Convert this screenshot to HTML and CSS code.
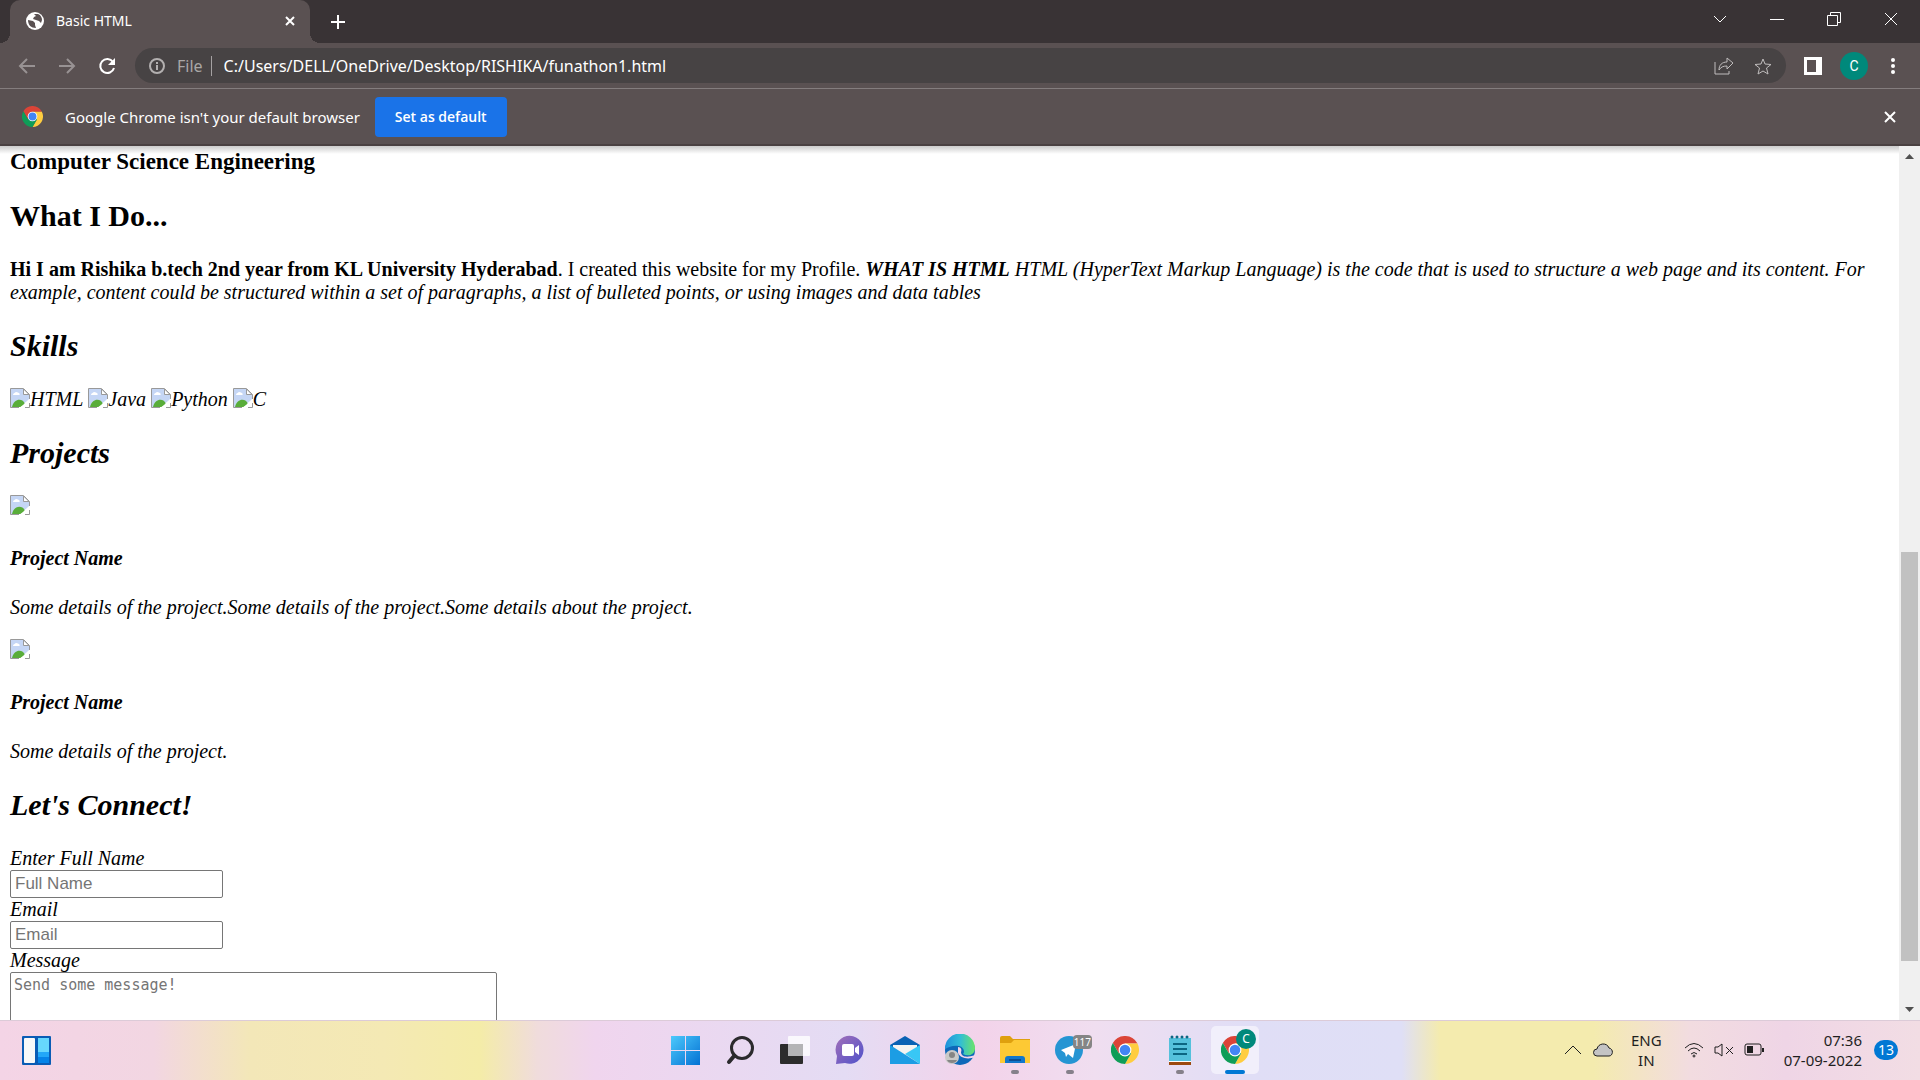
FILE: index.html
```html
<!DOCTYPE html>
<html lang="en">
<head>
  <title>Basic HTML</title>
  <meta charset="UTF-8">
  <link rel="stylesheet" href="styles.css">
</head>
<body>
<svg class="defs" width="0" height="0">
  <symbol id="chrome" viewBox="0 0 48 48">
    <path fill="#db4437" d="M3.2 12A24 24 0 0 1 44.800 12L45.400 13H24L13.600 30z"/>
    <path fill="#ffcd40" d="M24 13h21.400A24 24 0 0 1 24 48l10.400-18z"/>
    <path fill="#0f9d58" d="M24 48 34.400 30 24 24 13.600 30 3.200 12A24 24 0 0 0 24 48z"/>
    <circle cx="24" cy="24" r="11" fill="#fff"/>
    <circle cx="24" cy="24" r="9" fill="#4285f4"/>
  </symbol>
  <symbol id="broken" viewBox="0 0 20 20">
    <path fill="#c5d6f5" d="M1 1h12l6 6v5L9 19H1z"/>
    <path fill="#fff" d="M3 7c0-2 2-2 3-3 2 0 2 1 3 1 1 1 1 2 0 2z"/>
    <path fill="#59ad3a" d="M2 19c2-9 11-9 13-3l-4 3z"/>
    <path fill="#fff" d="M20 10v4l-6 6H9l4-3z"/>
    <path fill="#fff" stroke="#999" d="M13.500 1v5.500h5.500z"/>
    <path fill="none" stroke="#999" d="M9 19.500H.5V.5h13l6 6V11M15 19.500h4.500V15"/>
  </symbol>
</svg>

<header class="tabs">
  <div class="tab">
    <svg width="18" height="18" viewBox="0 0 18 18"><circle cx="9" cy="9" r="9" fill="#fff"/><path fill="#5a5152" d="M2 8l5 1 2 2v2l1 3c-5 0-8-3-8-8zM8 2h4c3 1 4 4 4 6l-1 3-2-2-3-1-3-1 1-2 2-1z"/></svg>
    <span class="tab-title">Basic HTML</span>
    <button class="icon" aria-label="Close tab"><svg width="10" height="10" viewBox="0 0 10 10"><path d="M1 1l8 8M9 1L1 9"/></svg></button>
  </div>
  <button class="icon new-tab" aria-label="New tab"><svg width="16" height="16" viewBox="0 0 16 16"><path d="M8 1v14M1 8h14"/></svg></button>
  <div class="window-buttons">
    <button class="icon thin" aria-label="Search tabs"><svg width="14" height="14" viewBox="0 0 14 14"><path d="M1 4l6 6 6-6"/></svg></button>
    <button class="icon thin" aria-label="Minimize"><svg width="14" height="14" viewBox="0 0 14 14"><path d="M0 7.500h14"/></svg></button>
    <button class="icon thin" aria-label="Restore"><svg width="14" height="14" viewBox="0 0 14 14"><path d="M.5 3.500h10v10H.5zM3.500 3V.5h10v10H11"/></svg></button>
    <button class="icon thin" aria-label="Close"><svg width="14" height="14" viewBox="0 0 14 14"><path d="M1 1l12 12M13 1L1 13"/></svg></button>
  </div>
</header>

<nav class="toolbar">
  <button class="icon dim" aria-label="Back"><svg width="18" height="18" viewBox="0 0 18 18"><path d="M17 9H2M9 2L2 9l7 7"/></svg></button>
  <button class="icon dim" aria-label="Forward"><svg width="18" height="18" viewBox="0 0 18 18"><path d="M1 9h15M9 2l7 7-7 7"/></svg></button>
  <button class="icon" aria-label="Reload"><svg width="18" height="18" viewBox="0 0 18 18"><path d="M15 5a7 7 0 1 0 1 6"/><path class="solid" d="M17 1v7h-7z"/></svg></button>
  <div class="address">
    <svg class="info" width="16" height="16" viewBox="0 0 16 16"><circle cx="8" cy="8" r="7"/><path d="M8 7v5M8 4v2"/></svg>
    <span class="scheme">File</span>
    <input class="url" type="text" aria-label="Address" value="C:/Users/DELL/OneDrive/Desktop/RISHIKA/funathon1.html">
    <button class="icon soft" aria-label="Share"><svg width="20" height="18" viewBox="0 0 20 18"><path d="M1 5v12h14v-3M5 13c0-5 3-8 8-8V1l6 5-6 6V9c-4 0-6 1-8 4z"/></svg></button>
    <button class="icon soft" aria-label="Bookmark"><svg width="18" height="18" viewBox="0 0 18 18"><path d="M9 2l2 5 6 .5-4.500 3.500 1.500 6-5-3-5 3 1.500-6L1 7.500 7 7z"/></svg></button>
  </div>
  <div class="toolbar-end">
    <button class="icon" aria-label="Side panel"><svg width="18" height="18" viewBox="0 0 18 18"><path class="solid" fill-rule="evenodd" d="M0 0h18v18H0zM3 3v12h9V3z"/></svg></button>
    <button class="avatar" aria-label="Profile">C</button>
    <button class="icon" aria-label="Menu"><svg width="10" height="18" viewBox="0 0 10 18"><g class="solid"><circle cx="7" cy="3" r="2"/><circle cx="7" cy="9" r="2"/><circle cx="7" cy="15" r="2"/></g></svg></button>
  </div>
</nav>

<div class="infobar">
  <svg width="21" height="21"><use href="#chrome"/></svg>
  <span class="infobar-text">Google Chrome isn't your default browser</span>
  <button class="default-button">Set as default</button>
  <button class="icon infobar-close" aria-label="Dismiss"><svg width="12" height="12" viewBox="0 0 12 12"><path d="M1 1l10 10M11 1L1 11"/></svg></button>
</div>

<div class="viewport">
  <main class="page">
    <h3>Computer Science Engineering</h3>
    <h2>What I Do...</h2>
    <p><b>Hi I am Rishika b.tech 2nd year from KL University Hyderabad</b>. I created this website for my Profile. <i><b>WHAT IS HTML</b> HTML (HyperText Markup Language) is the code that is used to structure a web page and its content. For example, content could be structured within a set of paragraphs, a list of bulleted points, or using images and data tables</i></p>
    <div class="slanted">
      <h2>Skills</h2>
      <div class="skills">
        <span><svg width="20" height="20"><use href="#broken"/></svg>HTML</span>
        <span><svg width="20" height="20"><use href="#broken"/></svg>Java</span>
        <span><svg width="20" height="20"><use href="#broken"/></svg>Python</span>
        <span><svg width="20" height="20"><use href="#broken"/></svg>C</span>
      </div>
      <h2>Projects</h2>
      <div class="picture"><svg width="20" height="20"><use href="#broken"/></svg></div>
      <h4>Project Name</h4>
      <p>Some details of the project.Some details of the project.Some details about the project.</p>
      <div class="picture"><svg width="20" height="20"><use href="#broken"/></svg></div>
      <h4>Project Name</h4>
      <p>Some details of the project.</p>
      <h2>Let's Connect!</h2>
      <form>
        <label for="name">Enter Full Name</label>
        <input class="field" type="text" id="name" placeholder="Full Name">
        <label for="email">Email</label>
        <input class="field" type="email" id="email" placeholder="Email">
        <label for="message">Message</label>
        <textarea class="message" id="message" placeholder="Send some message!"></textarea>
      </form>
    </div>
  </main>
  <div class="scrollbar">
    <svg width="9" height="5" viewBox="0 0 9 5"><path d="M0 5l4.500-5L9 5z"/></svg>
    <div class="track"><div class="thumb"></div></div>
    <svg width="9" height="5" viewBox="0 0 9 5"><path d="M0 0h9L4.500 5z"/></svg>
  </div>
</div>

<footer class="taskbar">
  <div class="side">
    <button class="app" aria-label="Widgets"><svg width="32" height="32" viewBox="0 0 32 32"><rect x="2" y="2" width="29" height="29" rx="1" fill="#0a5cb5"/><rect x="4" y="4" width="11" height="25" rx="1" fill="#f8f8f8"/><path fill="#67d7fd" d="M18 4h11v14H18z"/><path fill="#22a7f8" d="M18 18h11v5H18z"/><path fill="#0583e8" d="M18 23h11v6H18z"/></svg></button>
  </div>
  <div class="apps">
    <button class="app" aria-label="Start"><svg width="32" height="32" viewBox="0 0 32 32"><defs><linearGradient id="win" x2="1" y2="1"><stop stop-color="#4cc9fc"/><stop offset="1" stop-color="#0471d3"/></linearGradient></defs><path fill="url(#win)" d="M2 2h14v14H2zM17 2h14v14H17zM2 17h14v14H2zM17 17h14v14H17z"/></svg></button>
    <button class="app" aria-label="Search"><svg width="32" height="32" viewBox="0 0 32 32"><circle cx="18" cy="14" r="10.500" fill="none" stroke="#2b2a2d" stroke-width="3"/><path stroke="#2b2a2d" stroke-width="4" stroke-linecap="round" d="M10.500 21.500L5 28"/></svg></button>
    <button class="app" aria-label="Task view"><svg width="32" height="32" viewBox="0 0 32 32"><rect x="1" y="10" width="23" height="20" rx="1" fill="#2c2c2c"/><rect x="9" y="2" width="22" height="20" rx="1" fill="#fff" opacity=".8"/><path fill="#b4b4b6" d="M9 10h15v12H9z"/></svg></button>
    <button class="app" aria-label="Chat"><svg width="32" height="32" viewBox="0 0 32 32"><defs><linearGradient id="chat" x2="1" y2="1"><stop stop-color="#a26fb8"/><stop offset="1" stop-color="#4f52cb"/></linearGradient></defs><path fill="url(#chat)" d="M2 30l1-8a14 14 0 1 1 8 7z"/><rect x="8" y="10" width="12" height="12" rx="2" fill="#fff"/><path fill="#fff" d="M21 14l4-3v10l-4-3z"/></svg></button>
    <button class="app" aria-label="Mail"><svg width="32" height="32" viewBox="0 0 32 32"><path fill="#0962b4" d="M1 11L16 2l15 9v5H1z"/><path fill="#f3f3f1" d="M4 11h24v7L16 22 4 18z"/><path fill="#1c9de4" d="M1 11l30 19H1z"/><path fill="#38c7f5" d="M31 11v19L16 20z"/></svg></button>
    <button class="app" aria-label="Edge"><svg width="32" height="32" viewBox="0 0 32 32"><defs><linearGradient id="edge" x2="1"><stop stop-color="#1e91dc"/><stop offset=".5" stop-color="#31bdd6"/><stop offset="1" stop-color="#6be46a"/></linearGradient></defs><circle cx="16" cy="16" r="15" fill="#0e68b9"/><path fill="url(#edge)" d="M1 15a15 15 0 0 1 30-1c0 7-7 9-12 6 2-2 1-7-4-8-6-1-10 1-14 3z"/><path fill="#f3d4ec" d="M14 13c3 0 4 3 3 5 0 5 6 6 14 3v2c-7 3-15 1-17-4z"/><circle cx="8" cy="23" r="7" fill="#c9c9c8"/><circle cx="8" cy="21" r="3" fill="#858585"/><path fill="#858585" d="M3 26h10c-1 4-9 4-10 0z"/></svg></button>
    <button class="app running" aria-label="File Explorer"><svg width="32" height="32" viewBox="0 0 32 32"><path fill="#dfa00e" d="M1 4q0-2 2-2h8l3 3h17v8H1z"/><path fill="#fdc934" d="M1 9h11l3-3h16v23H1z"/><path fill="#1277cb" d="M6 29v-4q0-3 3-3h14q3 0 3 3v4z"/><path stroke="#0b4f93" stroke-width="2" d="M10 26h12"/></svg></button>
    <button class="app running" aria-label="Telegram"><svg width="32" height="32" viewBox="0 0 32 32"><circle cx="15" cy="16" r="14" fill="#2595d3"/><path fill="#fff" d="M7 16l15-6-3 14-5-4-2 3-1-4z"/></svg><span class="count">117</span></button>
    <button class="app" aria-label="Chrome"><svg width="28" height="28"><use href="#chrome"/></svg></button>
    <button class="app running" aria-label="Notepad"><svg width="32" height="32" viewBox="0 0 32 32"><path fill="#9c4a10" d="M5 27h22v4H5z"/><path fill="#fff" d="M5 26h22v2H5z"/><path fill="#55c1dc" d="M5 4h22v23H5z"/><path stroke="#0c6682" stroke-width="2" d="M9 10h14M9 15h14M9 20h14"/><path stroke="#0c6682" stroke-width="3" stroke-linecap="round" stroke-dasharray="0 5" d="M8 3h17"/></svg></button>
    <button class="app running active" aria-label="Chrome, profile C"><svg width="28" height="28"><use href="#chrome"/></svg><span class="profile">C</span></button>
  </div>
  <div class="side tray">
    <button class="tray-item" aria-label="Hidden icons"><svg width="16" height="10" viewBox="0 0 16 10"><path d="M0 9l8-8 8 8"/></svg></button>
    <svg class="cloud" width="20" height="14" viewBox="0 0 20 14"><path d="M4 13a3 3 0 0 1 0-7c1-6 10-7 12-1 5 1 4 8 0 8z"/></svg>
    <span class="language">ENG<br>IN</span>
    <svg class="wifi" width="20" height="16" viewBox="0 0 20 16"><path d="M1 6q9-9 18 0M4 9q6-6 12 0M7 12q3-3 6 0"/><circle cx="10" cy="14" r="1"/></svg>
    <svg class="volume" width="20" height="14" viewBox="0 0 20 14"><path d="M1 4h3l4-3v12l-4-3H1zM12 4l7 7M19 4l-7 7"/></svg>
    <svg class="battery" width="20" height="14" viewBox="0 0 20 14"><rect x="1" y="1" width="16" height="11" rx="2"/><path class="filled" d="M3 3h6v7H3zM18 5h2v4h-2z"/></svg>
    <time class="clock">07:36<br>07-09-2022</time>
    <span class="notices">13</span>
  </div>
</footer>
</body>
</html>
```

FILE: styles.css
```css
* {
  box-sizing: border-box;
}

body {
  display: flex;
  flex-direction: column;
  height: 100vh;
  margin: 0;
  overflow: hidden;
  font-family: "Noto Sans", "Open Sans", sans-serif;
  font-size: 15px;
  color: #fff;
}

button {
  padding: 0;
  border: 0;
  background: none;
  font-family: inherit;
  color: inherit;
}

svg {
  flex: none;
}

.defs {
  position: absolute;
}

.icon {
  display: flex;
  fill: none;
  stroke: #fff;
  stroke-width: 2;
}

.icon .solid {
  fill: #fff;
  stroke: none;
}

.thin {
  stroke-width: 1;
}

.dim {
  stroke: #989293;
}

.soft {
  stroke: #c0bdbd;
  stroke-width: 1;
}

/* Browser window */

.tabs {
  display: flex;
  align-items: center;
  flex: none;
  height: 43px;
  padding-left: 10px;
  background: #393335;
}

.tab {
  display: flex;
  align-items: center;
  gap: 12px;
  position: relative;
  width: 300px;
  height: 43px;
  padding: 0 15px 2px 16px;
  border-radius: 10px 10px 0 0;
  background: #5a5152;
}

/* curved feet of the tab */
.tab::before,
.tab::after {
  content: "";
  position: absolute;
  bottom: 0;
  width: 10px;
  height: 10px;
}

.tab::before {
  right: 100%;
  background: radial-gradient(circle at 0 0, #393335 10px, #5a5152 10px);
}

.tab::after {
  left: 100%;
  background: radial-gradient(circle at 100% 0, #393335 10px, #5a5152 10px);
}

.tab-title {
  flex: 1;
  font-size: 14px;
}

.new-tab {
  margin-left: 20px;
}

.window-buttons {
  display: flex;
  gap: 43px;
  margin-left: auto;
  padding: 0 22px 6px 0;
}

.toolbar {
  display: flex;
  align-items: center;
  gap: 22px;
  flex: none;
  height: 46px;
  padding: 0 24px 0 18px;
  border-bottom: 1px solid #847d7e;
  background: #5a5152;
}

.toolbar-end {
  display: flex;
  align-items: center;
  gap: 18px;
}

.address {
  display: flex;
  align-items: center;
  flex: 1;
  gap: 20px;
  height: 35px;
  padding: 0 14px;
  margin: 0 -4px 0 -3px;
  border-radius: 18px;
  background: #474344;
}

.info {
  fill: none;
  stroke: #b3b0b0;
  stroke-width: 2;
}

.scheme {
  margin-left: -8px;
  padding-right: 8px;
  border-right: 1px solid #a5a1a2;
  font-size: 16px;
  line-height: 20px;
  color: #aaa7a7;
}

.url {
  flex: 1;
  margin-left: -8px;
  padding: 0;
  border: 0;
  background: none;
  font-family: inherit;
  font-size: 16px;
  color: #fff;
}

.avatar {
  width: 28px;
  height: 28px;
  border-radius: 50%;
  background: #00897b;
  font-family: Roboto, sans-serif;
  font-size: 14px;
}

.infobar {
  display: flex;
  align-items: center;
  flex: none;
  height: 57px;
  padding: 0 24px 0 22px;
  border-bottom: 2px solid #4a4142;
  background: #5a5152;
}

.infobar-text {
  margin: 0 15px 0 22px;
}

.default-button {
  height: 40px;
  padding: 0 20px;
  border-radius: 4px;
  background: #1a73e8;
  font-family: "Open Sans", sans-serif;
  font-size: 14px;
  font-weight: 600;
}

.infobar-close {
  margin-left: auto;
}

/* Page */

.viewport {
  display: flex;
  flex: 1;
  min-height: 0;
  background: linear-gradient(#ccc, #fff 8px);
}

.page {
  flex: 1;
  padding: 3px 8px 0 10px;
  overflow: hidden;
  font-family: "Liberation Serif", serif;
  font-size: 20px;
  line-height: 23px;
  color: #000;
}

.page h2,
.page h3 {
  margin: 0 0 25px;
}

.page h2 {
  font-size: 30px;
  line-height: 34px;
}

.page h3 {
  margin-bottom: 24px;
  font-size: 23px;
  line-height: 26px;
}

.page h4 {
  margin: 27px 0 26px;
  font-size: 20px;
}

.page p {
  margin: 0 0 20px;
}

.page p + h2,
.page p + .slanted,
.skills + h2 {
  margin-top: 25px;
}

.slanted {
  font-style: italic;
}

.skills {
  display: flex;
  gap: 5px;
}

.skills span {
  display: flex;
}

.picture {
  height: 25px;
}

form {
  display: flex;
  flex-direction: column;
  align-items: flex-start;
}

.field,
.message {
  border: 1px solid #767676;
  border-radius: 2px;
}

.field {
  width: 213px;
  height: 28px;
  padding: 0 4px;
  font-family: "Liberation Sans", sans-serif;
  font-size: 17px;
}

.message {
  width: 487px;
  height: 130px;
  padding: 3px;
  font-family: "DejaVu Sans Mono", monospace;
  font-size: 15px;
}

.field::placeholder,
.message::placeholder {
  color: #757575;
}

.scrollbar {
  display: flex;
  flex-direction: column;
  align-items: center;
  width: 21px;
  padding: 8px 0;
  background: #f0f0f0;
  fill: #505050;
}

.track {
  display: flex;
  flex-direction: column;
  justify-content: flex-end;
  flex: 1;
  width: 17px;
  padding-bottom: 46px;
}

.thumb {
  height: 51%;
  background: #c1c1c1;
}

/* Taskbar */

.taskbar {
  display: flex;
  flex: none;
  height: 60px;
  padding-bottom: 2px;
  border-top: 1px solid #dccbd8;
  background: linear-gradient(90deg, #f4d4e6 0%, #f2d6e2 8%, #f3e7b8 13%, #f4e9b4 20%, #f4eca8 25%, #f0dcdc 28%, #f0d5ee 31%, #e4dcf4 44%, #f3d3ea 51%, #f0def0 57%, #e0def6 65%, #dfdff6 73%, #f4ebae 75%, #f4ebae 83%, #f2dce0 88%, #efd5e6 93%, #f2dde4 100%);
  color: #1f1f1f;
}

.side {
  display: flex;
  align-items: center;
  flex: 1;
  padding: 0 12px;
}

.apps {
  display: flex;
  align-items: center;
  gap: 7px;
}

.app {
  display: flex;
  align-items: center;
  justify-content: center;
  position: relative;
  width: 48px;
  height: 48px;
  border-radius: 5px;
}

.running::after {
  content: "";
  position: absolute;
  bottom: 0;
  left: 20px;
  width: 8px;
  height: 4px;
  border-radius: 2px;
  background: #85808a;
}

.active {
  background: #f1effb;
}

.active::after {
  left: 14px;
  width: 20px;
  background: #0078d4;
}

.count,
.profile {
  position: absolute;
  color: #fff;
}

.count {
  top: 9px;
  right: 2px;
  padding: 0 1px;
  border-radius: 4px;
  background: #858585;
  font-size: 10px;
  line-height: 14px;
}

.profile {
  top: 3px;
  right: 3px;
  width: 20px;
  border-radius: 50%;
  background: #00897b;
  font-size: 12px;
  line-height: 20px;
}

.tray {
  justify-content: flex-end;
  font-size: 15px;
  line-height: 20px;
}

.tray svg {
  fill: none;
  stroke: #1f1f1f;
  stroke-width: 1;
}

.tray .cloud {
  margin: 0 18px 0 12px;
  fill: #c4c4c4;
}

.language {
  text-align: center;
}

.tray .wifi {
  margin-left: 22px;
}

.tray .volume {
  margin: 0 10px;
}

.clock {
  margin: 0 12px 0 20px;
  text-align: right;
}

.tray .filled {
  fill: #1f1f1f;
  stroke: none;
}

.notices {
  margin-right: 10px;
  padding: 0 4px;
  border-radius: 10px;
  background: #0078d4;
  font-size: 14px;
  color: #fff;
}
```
